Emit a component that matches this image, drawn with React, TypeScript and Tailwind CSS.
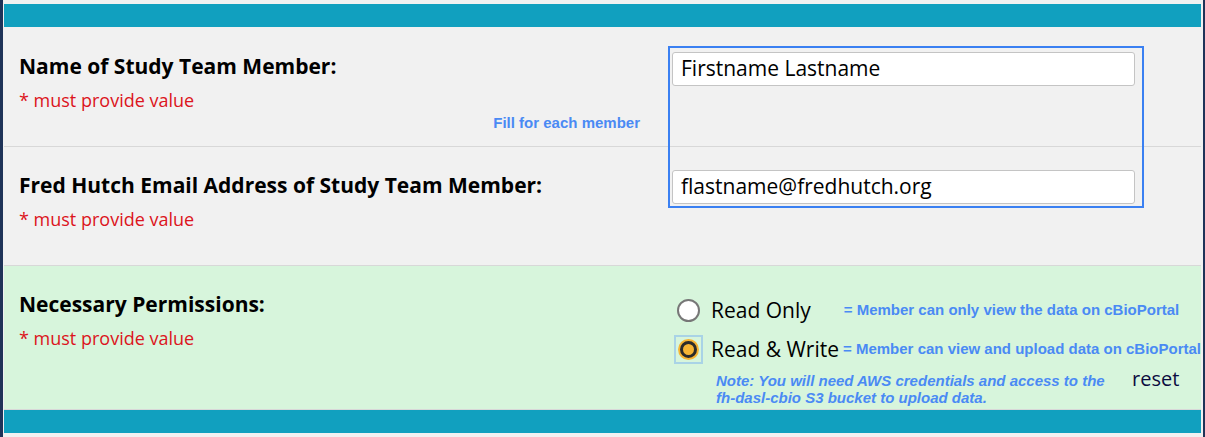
import React from 'react';

const label = "text-[21px] font-bold text-black leading-[28px] [font-family:'Open_Sans',sans-serif]";
const required = "mt-[8px] text-[18px] leading-[24px] text-[#dc1420] [font-family:'Open_Sans',sans-serif]";
const hint = "text-[15px] font-bold text-[#4a8af4] [font-family:'Liberation_Sans',Arial,sans-serif]";

function Field({ value }: { value: string }) {
  return (
    <div className="w-[463px] h-[34px] bg-white border border-[#c4c4c4] rounded-[3px] flex items-center px-[8px] text-[21px] text-black [font-family:'Open_Sans',sans-serif]">
      {value}
    </div>
  );
}

function Radio({ checked }: { checked?: boolean }) {
  if (checked) {
    return (
      <div className="w-[29px] h-[29px] border-2 border-[#a9d3e6] flex items-center justify-center">
        <div className="w-[21px] h-[21px] rounded-full bg-[#f6b434] flex items-center justify-center">
          <div className="w-[17px] h-[17px] rounded-full border-[3px] border-[#2b2b2b] bg-[#f6b434]" />
        </div>
      </div>
    );
  }
  return (
    <div className="w-[29px] h-[29px] flex items-center justify-center">
      <div className="w-[23px] h-[23px] rounded-full border-2 border-[#777] bg-white" />
    </div>
  );
}

export default function App() {
  return (
    <div className="w-[1205px] h-[437px] flex bg-[#1f3358]">
      <div className="w-[3px]" />
      <div className="flex-1 bg-[#f1f1f1] pt-[4px] px-[1px] flex flex-col">
        <div className="h-[23px] bg-[#11a0bf]" />

        <div className="relative">
          {/* row 1 */}
          <div className="h-[120px] flex border-b border-[#d8d8d8]">
            <div className="w-[664px] pl-[15px] pt-[25px] pr-[28px] flex flex-col">
              <div className={label}>Name of Study Team Member:</div>
              <div className={required}>* must provide value</div>
              <div className={`${hint} self-end leading-[17px] mt-[2px]`}>Fill for each member</div>
            </div>
            <div className="pl-[4px] pt-[25px]">
              <Field value="Firstname Lastname" />
            </div>
          </div>

          {/* row 2 */}
          <div className="h-[119px] flex border-b border-[#d8d8d8]">
            <div className="w-[664px] pl-[15px] pt-[24px] flex flex-col">
              <div className={label}>Fred Hutch Email Address of Study Team Member:</div>
              <div className={required}>* must provide value</div>
            </div>
            <div className="pl-[4px] pt-[23px]">
              <Field value="flastname@fredhutch.org" />
            </div>
          </div>

          {/* focus outline around the member inputs */}
          <div className="absolute left-[664px] top-[19px] w-[476px] h-[162px] border-2 border-[#3a80f2] pointer-events-none" />
        </div>

        {/* row 3 */}
        <div className="h-[144px] flex bg-[#d7f5dc] border-b border-[#d8d8d8]">
          <div className="w-[664px] pl-[15px] pt-[24px] flex flex-col">
            <div className={label}>Necessary Permissions:</div>
            <div className={required}>* must provide value</div>
          </div>
          <div className="pl-[6px] pt-[30px] flex flex-col">
            <div className="flex items-center h-[29px]">
              <Radio />
              <span className="ml-[8px] text-[21px] text-black [font-family:'Open_Sans',sans-serif]">Read Only</span>
              <span className={`${hint} ml-[33px]`}>= Member can only view the data on cBioPortal</span>
            </div>
            <div className="flex items-center h-[29px] mt-[10px]">
              <Radio checked />
              <span className="ml-[8px] text-[21px] text-black [font-family:'Open_Sans',sans-serif]">Read &amp; Write</span>
              <span className={`${hint} ml-[4px]`}>= Member can view and upload data on cBioPortal</span>
            </div>
            <div className="flex items-start mt-[8px]">
              <div className={`${hint} italic leading-[17px] ml-[42px] w-[416px]`}>
                Note: You will need AWS credentials and access to the<br />
                fh-dasl-cbio S3 bucket to upload data.
              </div>
              <span className="-mt-[8px] text-[20px] text-[#0b0b40] [font-family:'Open_Sans',sans-serif]">reset</span>
            </div>
          </div>
        </div>

        <div className="h-[23px] bg-[#11a0bf]" />
      </div>
      <div className="w-[1px] bg-[#f1f1f1]" />
      <div className="w-[2px]" />
    </div>
  );
}
